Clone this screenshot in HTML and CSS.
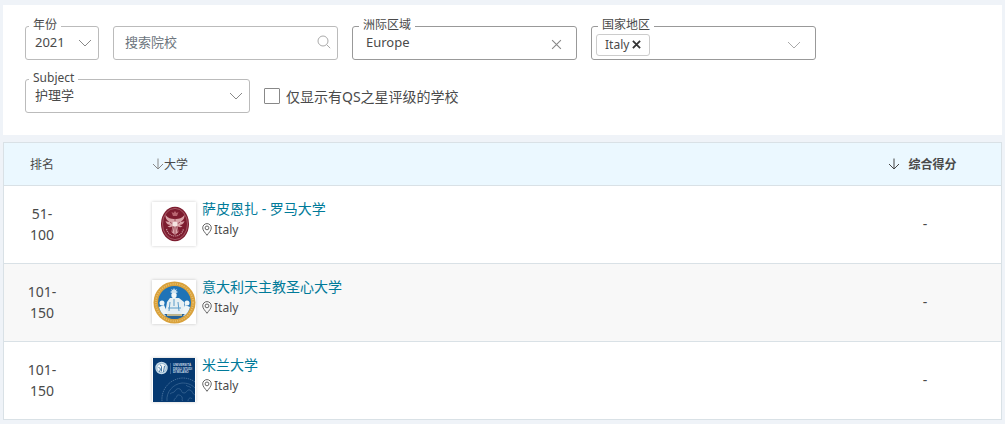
FILE: index.html
```html
<!DOCTYPE html>
<html lang="zh-CN">
<head>
	<meta charset="utf-8">
	<meta name="viewport" content="width=device-width, initial-scale=1">
	<title>护理学 2021</title>
	<link rel="stylesheet" href="styles.css">
</head>
<body>
	<svg class="sprite" aria-hidden="true">
		<symbol id="chevron" viewBox="0 0 14 8"><path d="M1 1l6 6 6-6"/></symbol>
		<symbol id="search" viewBox="0 0 14 14"><circle cx="6" cy="6" r="5"/><path d="M9.6 9.6l3.6 3.6"/></symbol>
		<symbol id="close" viewBox="0 0 10 10"><path d="M1 1l8 8M9 1l-8 8"/></symbol>
		<symbol id="arrow" viewBox="0 0 12 12"><path d="M6 .5v10.5M1 6l5 5 5-5"/></symbol>
		<symbol id="pin" viewBox="0 0 10 13"><path d="M5 12.3C3.4 9.8.7 7.600.7 4.900a4.300 4.300 0 0 1 8.600 0C9.300 7.600 6.600 9.800 5 12.300z"/><circle cx="5" cy="4.900" r="1.900"/></symbol>
	</svg>

	<form class="filters">
		<div class="field field-small">
			<label class="field-label" for="year">年份</label>
			<select class="field-input" id="year">
				<option>2021</option>
			</select>
			<svg class="icon icon-chevron"><use href="#chevron"/></svg>
		</div>
		<div class="field">
			<input class="field-input input-search" type="text" placeholder="搜索院校" aria-label="搜索院校">
			<button class="icon-button" type="submit" aria-label="搜索"><svg class="icon icon-search"><use href="#search"/></svg></button>
		</div>
		<div class="field field-dark">
			<label class="field-label" for="region">洲际区域</label>
			<select class="field-input" id="region">
				<option>Europe</option>
			</select>
			<button class="icon-button button-clear" type="button" aria-label="清除"><svg class="icon icon-close"><use href="#close"/></svg></button>
		</div>
		<div class="field field-dark">
			<label class="field-label" for="country">国家地区</label>
			<span class="chip">Italy<button class="chip-remove" type="button" aria-label="移除 Italy"><svg class="icon icon-remove"><use href="#close"/></svg></button></span>
			<input class="field-input input-country" id="country" type="text">
			<button class="icon-button button-open" type="button" aria-label="展开"><svg class="icon icon-chevron icon-light"><use href="#chevron"/></svg></button>
		</div>
		<div class="field">
			<label class="field-label" for="subject">Subject</label>
			<select class="field-input" id="subject">
				<option>护理学</option>
			</select>
			<svg class="icon icon-chevron"><use href="#chevron"/></svg>
		</div>
		<label class="check"><input class="check-box" type="checkbox">仅显示有QS之星评级的学校</label>
	</form>

	<table class="ranking">
		<thead>
			<tr>
				<th class="rank">排名</th>
				<th class="uni"><button class="sort" type="button"><svg class="icon icon-arrow icon-muted"><use href="#arrow"/></svg>大学</button></th>
				<th class="score"><button class="sort sort-active" type="button"><svg class="icon icon-arrow"><use href="#arrow"/></svg>综合得分</button></th>
			</tr>
		</thead>
		<tbody>
			<tr>
				<td class="rank">51-<br>100</td>
				<td class="uni">
					<div class="uni-wrap">
						<svg class="logo" viewBox="0 0 44 44" aria-hidden="true">
							<rect width="44" height="44" fill="#fff"/>
							<ellipse cx="23" cy="22" rx="14" ry="17.2" fill="#7d1c2f"/>
							<ellipse cx="23" cy="22" rx="12.5" ry="15.6" fill="none" stroke="#b5707b" stroke-width=".7"/>
							<path d="M14.5 27c1 4 4 7 8.500 7s7.500-3 8.500-7" fill="none" stroke="#c78f98" stroke-width="1.2" stroke-dasharray="1.2 .8"/>
							<path d="M22 17c-3 0-6-1-8.500-4 0 4 2 6 4 6.500-2 .5-3 0-4-.5 1 3 3 4 5 4-1 1-2 1-3 1 2 2 4 1 5 0l-1 6 3.500 3 3.500-3-1-6c1 1 3 2 5 0-1 0-2 0-3-1 2 0 4-1 5-4-1 .5-2 1-4 .5 2-.5 4-2.500 4-6.500-2.500 3-5.500 4-8.500 4z" fill="#d9a3a8"/>
							<path d="M18 20l4 3-2 7M28 20l-4 3 2 7M23 16v17" fill="none" stroke="#872c3d" stroke-width=".7"/>
							<circle cx="23" cy="22" r="2.6" fill="#f5e4e2"/>
							<path d="M21 14l-1.500-4 2 1 1.500-2 1.500 2 2-1-1.500 4z" fill="#b86570"/>
						</svg>
						<div class="uni-text">
							<a class="uni-name" href="#">萨皮恩扎 - 罗马大学</a>
							<span class="uni-place"><svg class="icon icon-pin"><use href="#pin"/></svg>Italy</span>
						</div>
					</div>
				</td>
				<td class="score">-</td>
			</tr>
			<tr>
				<td class="rank">101-<br>150</td>
				<td class="uni">
					<div class="uni-wrap">
						<svg class="logo" viewBox="0 0 44 44" aria-hidden="true">
							<rect width="44" height="44" fill="#fff"/>
							<circle cx="22.5" cy="22.5" r="21" fill="#d9a13b"/>
							<circle cx="22.5" cy="22.5" r="18.6" fill="none" stroke="#e8c070" stroke-width="1.6" stroke-dasharray="1 1.3"/>
							<circle cx="22.5" cy="22.5" r="16.5" fill="#1f73b7"/>
							<path d="M22 8l1 2 2-1-1 2 2 1-2 1 1 2-2-1-1 2-1-2-2 1 1-2-2-1 2-1-1-2 2 1z" fill="#cfe3f0"/>
							<circle cx="22" cy="15.5" r="2.6" fill="#f3f7f8"/>
							<path d="M18 18h9l5 4 1 12H13l2-12z" fill="#e6eff3"/>
							<path d="M22 19v7M18 22l-1 9M26 22l1 9M16 28h13" fill="none" stroke="#5b9bc9" stroke-width="1"/>
							<circle cx="10" cy="23" r="2.5" fill="#eef5f7"/>
							<circle cx="35" cy="23" r="2.5" fill="#eef5f7"/>
							<path d="M7 27l5-2 4 9-3 2c-3-2-5-5-6-9zM38 27l-5-2-4 9 3 2c3-2 5-5 6-9z" fill="#eef5f7"/>
							<path d="M12 34h21c-3 3-7 5-10.500 5S15 37 12 34z" fill="#2a6394"/>
							<path d="M15 35h15" stroke="#f0d08a" stroke-width="1.5"/>
						</svg>
						<div class="uni-text">
							<a class="uni-name" href="#">意大利天主教圣心大学</a>
							<span class="uni-place"><svg class="icon icon-pin"><use href="#pin"/></svg>Italy</span>
						</div>
					</div>
				</td>
				<td class="score">-</td>
			</tr>
			<tr>
				<td class="rank">101-<br>150</td>
				<td class="uni">
					<div class="uni-wrap">
						<svg class="logo" viewBox="0 0 44 44" aria-hidden="true">
							<rect width="44" height="44" fill="#fff"/>
							<rect x="1" width="42" height="44" fill="#063970"/>
							<circle cx="9.5" cy="10" r="6.2" fill="#c6dbe9"/>
							<circle cx="9.5" cy="10" r="4.6" fill="#f1f6f9" stroke="#6f9cbf" stroke-width=".6"/>
							<path d="M8 6.500l1.500 2v5M6.500 9l2 2-1 3M12.500 8l-1 6" fill="none" stroke="#487ba6" stroke-width="1"/>
							<path d="M18.500 5v11" stroke="#7193b5" stroke-width=".5"/>
							<g class="logo-text">
								<text x="21" y="8">UNIVERSITÀ</text>
								<text x="21" y="11.5">DEGLI STUDI</text>
								<text x="21" y="15">DI MILANO</text>
							</g>
							<g fill="none" stroke="#416b98" stroke-width=".7">
								<path d="M10 43c-1-12 8-22 20-23 5 0 9 1 13 4" stroke-width="1" stroke-dasharray="1.5 .7"/>
								<path d="M15 43c-1-9 6-17 15-18 5 0 9 1 13 5"/>
								<path d="M18 36c2-2 4-1 5-3s3-3 5-2 1 4 4 4 3-4 6-3 2 4 5 5M22 43c0-3 3-3 3-5s4-1 5 1-1 3 1 4M34 27c1 2 4 1 5 3M36 43c0-3 3-4 4-2"/>
							</g>
						</svg>
						<div class="uni-text">
							<a class="uni-name" href="#">米兰大学</a>
							<span class="uni-place"><svg class="icon icon-pin"><use href="#pin"/></svg>Italy</span>
						</div>
					</div>
				</td>
				<td class="score">-</td>
			</tr>
		</tbody>
	</table>
</body>
</html>
```
FILE: styles.css
```css
*
{
	box-sizing: border-box;
}

body
{
	margin: 0;
	padding: 5px 3px 4px;
	background-color: #eff3f8;
	font-family: "Noto Sans", "Noto Sans CJK SC", sans-serif;
	font-size: 14px;
	color: #4a4a4a;
}

button, input, select
{
	font-family: inherit;
	color: inherit;
}

button
{
	padding: 0;
	border: 0;
	background: none;
	cursor: pointer;
}

.sprite
{
	display: none;
}

.icon
{
	display: block;
	flex: none;
	fill: none;
	stroke: #888;
	stroke-width: 1;
	pointer-events: none;
}

/* filters */

.filters
{
	display: flex;
	flex-wrap: wrap;
	gap: 19px 14px;
	padding: 21px 22px 22px;
	background-color: #fff;
}

.field
{
	position: relative;
	display: flex;
	align-items: center;
	width: 225px;
	height: 34px;
	border: 1px solid #bbb;
	border-radius: 3px;
}

.field-small
{
	width: 74px;
}

.field-dark
{
	border-color: #999;
}

.field-label
{
	position: absolute;
	top: -9px;
	left: 3px;
	padding: 0 4px;
	background-color: #fff;
	font-size: 12px;
	line-height: 14px;
}

.field-dark .field-label
{
	left: 6px;
}

.field-input
{
	flex: 1;
	min-width: 0;
	height: 32px;
	padding: 0 9px 2px;
	border: 0;
	outline: 0;
	background: none;
	appearance: none;
	font-size: 13px;
}

.field-dark .field-input
{
	padding-left: 13px;
}

.input-search
{
	padding-left: 11px;
}

.input-search::placeholder
{
	color: #6c757d;
	opacity: 1;
}

.icon-chevron
{
	width: 14px;
	height: 8px;
	margin-right: 6px;
}

.icon-light
{
	margin: 0;
	stroke: #aaa;
}

.icon-search
{
	width: 14px;
	height: 14px;
	margin: 0 6px 2px 0;
	stroke: #aaa;
}

.icon-close
{
	width: 11px;
	height: 11px;
}

.button-clear, .button-open
{
	padding: 3px 14px 0;
}

.chip
{
	display: flex;
	align-items: center;
	gap: 3px;
	height: 22px;
	margin: 3px 0 0 4px;
	padding: 0 8px;
	border: 1px solid #ccc;
	border-radius: 3px;
	font-size: 12px;
}

.icon-remove
{
	width: 9px;
	height: 9px;
	stroke: #333;
	stroke-width: 2;
}

.check
{
	display: flex;
	align-items: center;
	gap: 6px;
}

.check-box
{
	width: 16px;
	height: 16px;
	margin: 0;
	border: 1px solid #888;
	border-radius: 1px;
	background-color: #fff;
	appearance: none;
}

.check-box:checked
{
	background-color: #007a99;
}

/* ranking table */

.ranking
{
	width: 100%;
	margin-top: 7px;
	border: 1px solid #d9e1e6;
	border-spacing: 0;
	background-color: #fff;
}

.ranking th
{
	height: 43px;
	padding: 0;
	border-bottom: 1px solid #d9e1e6;
	background-color: #ebf8ff;
	font-size: 12px;
	font-weight: 400;
}

.ranking td
{
	height: 78px;
	padding: 0 0 2px;
	border-bottom: 1px solid #d9e1e6;
	line-height: 21px;
}

.ranking tbody tr:nth-child(even)
{
	background-color: #f8f8f8;
}

.ranking tbody tr:last-child td
{
	height: 77px;
	border-bottom: 0;
}

.ranking .rank
{
	width: 76px;
	text-align: center;
}

.ranking .uni
{
	padding-left: 72px;
	text-align: left;
}

.ranking .score
{
	width: 152px;
	text-align: center;
}

.sort
{
	display: inline-flex;
	align-items: center;
	font-size: 12px;
}

.sort-active
{
	gap: 8px;
	margin-right: 5px;
	font-weight: 700;
}

.icon-arrow
{
	width: 12px;
	height: 12px;
	stroke: #444;
}

.icon-muted
{
	stroke: #888;
}

.uni-wrap
{
	display: flex;
	gap: 6px;
}

.logo
{
	display: block;
	flex: none;
	width: 44px;
	height: 44px;
	box-shadow: 0 0 3px rgba(0, 0, 0, 0.2);
}

.logo-text
{
	font-family: "Liberation Sans", sans-serif;
	font-size: 3px;
	font-weight: 700;
	fill: #cfdbe8;
}

.uni-text
{
	display: flex;
	flex-direction: column;
	gap: 7px;
	line-height: 14px;
}

.uni-name
{
	color: #007a99;
	text-decoration: none;
}

.uni-place
{
	display: flex;
	align-items: center;
	gap: 2px;
	font-size: 12px;
}

.icon-pin
{
	width: 10px;
	height: 13px;
	stroke: #666;
}
```
